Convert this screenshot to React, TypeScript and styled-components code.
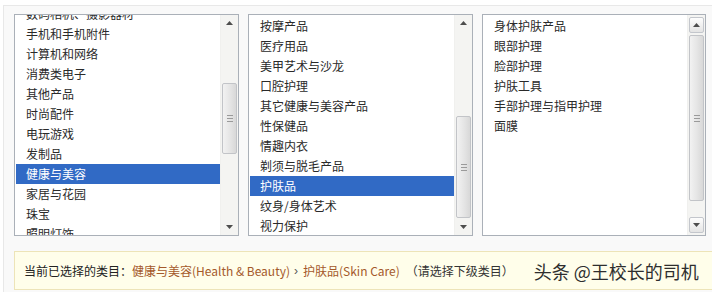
import styled, { createGlobalStyle } from 'styled-components';

const GlobalStyle = createGlobalStyle`
  html, body {
    margin: 0;
    padding: 0;
    background: #ffffff;
  }
  body {
    font-family: "Noto Sans CJK SC", "Liberation Sans", sans-serif;
    width: 712px;
    height: 292px;
    overflow: hidden;
  }
`;

const Panel = styled.div`
  margin: 5px 0 0 3px;
  width: 720px;
  height: 300px;
  box-sizing: border-box;
  border: 1px solid #e8e8e8;
  background: #f9f9f9;
  padding: 8px 0 0 10px;
`;

const Lists = styled.div`
  display: flex;
  gap: 9px;
`;

const ListBox = styled.div<{ $width: number }>`
  width: ${p => p.$width}px;
  height: 222px;
  box-sizing: border-box;
  border: 1px solid #aab0b8;
  background: #ffffff;
  display: flex;
  overflow: hidden;
`;

const Items = styled.ul<{ $scroll: number }>`
  list-style: none;
  margin: 0;
  padding: 0;
  flex: 1;
  min-width: 0;
  overflow: hidden;
  padding-top: 1px;
  & > li:first-child {
    margin-top: ${p => -p.$scroll}px;
  }
`;

const Item = styled.li<{ $selected?: boolean }>`
  height: 20px;
  line-height: 20px;
  padding-left: 10px;
  margin-left: 1px;
  font-size: 12px;
  white-space: nowrap;
  color: ${p => (p.$selected ? '#ffffff' : '#2a2a2a')};
  background: ${p => (p.$selected ? '#316ac5' : 'transparent')};
`;

const ScrollBar = styled.div`
  width: 17px;
  flex-shrink: 0;
  display: flex;
  flex-direction: column;
  background: #f4f4f2;
  border-left: 1px solid #f0f0ee;
`;

const Arrow = styled.div<{ $boxed?: boolean }>`
  height: 16px;
  flex-shrink: 0;
  display: flex;
  align-items: center;
  justify-content: center;
  margin: ${p => (p.$boxed ? '2px 1px' : '0')};
  box-sizing: border-box;
  border: ${p => (p.$boxed ? '1px solid #c3c6cc' : '1px solid transparent')};
  border-radius: 2px;
  background: ${p => (p.$boxed ? 'linear-gradient(#fdfdfd, #e4e4e4)' : 'transparent')};
`;

const Track = styled.div`
  flex: 1;
  display: flex;
  flex-direction: column;
`;

const Thumb = styled.div<{ $top: number; $height: number }>`
  margin: ${p => p.$top}px 1px 0 1px;
  height: ${p => p.$height}px;
  box-sizing: border-box;
  border: 1px solid #c2c4c8;
  border-radius: 2px;
  background: linear-gradient(90deg, #f2f2f2, #e6e6e6 50%, #d8d8d8);
  display: flex;
  align-items: center;
  justify-content: center;
`;

const Grip = styled.div`
  width: 6px;
  height: 7px;
  background: repeating-linear-gradient(#9a9a9a 0 1px, transparent 1px 3px);
`;

const InfoBar = styled.div`
  margin-top: 15px;
  height: 39px;
  box-sizing: border-box;
  border: 1px solid #ede4b8;
  border-right: none;
  background: #fffeea;
  display: flex;
  align-items: center;
  padding-left: 9px;
  font-size: 12px;
  white-space: nowrap;
`;

const Label = styled.span`
  color: #222222;
`;

const Crumb = styled.span`
  color: #a4592a;
`;

const Sep = styled.span`
  color: #555555;
  margin: 0 5px 0 4px;
  font-family: "Liberation Sans", sans-serif;
`;

const Hint = styled.span`
  color: #333333;
  margin-left: 6px;
`;

const Watermark = styled.span`
  margin-left: 20px;
  font-size: 18px;
  color: #2e2e2e;
  letter-spacing: 0;
`;

function ArrowGlyph({ down }: { down?: boolean }) {
  return (
    <svg width="7" height="4" viewBox="0 0 7 4">
      <path d={down ? 'M0 0 H7 L3.5 4 Z' : 'M0 4 H7 L3.5 0 Z'} fill="#4d4d4d" />
    </svg>
  );
}

interface ListProps {
  items: string[];
  selected?: string;
  scroll?: number;
  width: number;
  thumbTop: number;
  thumbHeight: number;
  boxed?: boolean;
}

function CategoryList({ items, selected, scroll = 0, width, thumbTop, thumbHeight, boxed }: ListProps) {
  return (
    <ListBox $width={width}>
      <Items $scroll={scroll}>
        {items.map(it => (
          <Item key={it} $selected={it === selected}>{it}</Item>
        ))}
      </Items>
      <ScrollBar>
        <Arrow $boxed={boxed}><ArrowGlyph /></Arrow>
        <Track>
          <Thumb $top={thumbTop} $height={thumbHeight}><Grip /></Thumb>
        </Track>
        <Arrow $boxed={boxed}><ArrowGlyph down /></Arrow>
      </ScrollBar>
    </ListBox>
  );
}

const level1 = [
  '数码相机、摄影器材',
  '手机和手机附件',
  '计算机和网络',
  '消费类电子',
  '其他产品',
  '时尚配件',
  '电玩游戏',
  '发制品',
  '健康与美容',
  '家居与花园',
  '珠宝',
  '照明灯饰',
];

const level2 = [
  '按摩产品',
  '医疗用品',
  '美甲艺术与沙龙',
  '口腔护理',
  '其它健康与美容产品',
  '性保健品',
  '情趣内衣',
  '剃须与脱毛产品',
  '护肤品',
  '纹身/身体艺术',
  '视力保护',
];

const level3 = ['身体护肤产品', '眼部护理', '脸部护理', '护肤工具', '手部护理与指甲护理', '面膜'];

export default function App() {
  return (
    <>
      <GlobalStyle />
      <Panel>
        <Lists>
          <CategoryList items={level1} selected="健康与美容" scroll={12} width={225} thumbTop={52} thumbHeight={71} />
          <CategoryList items={level2} selected="护肤品" width={225} thumbTop={85} thumbHeight={102} />
          <CategoryList items={level3} width={224} thumbTop={0} thumbHeight={166} boxed />
        </Lists>
        <InfoBar>
          <Label>当前已选择的类目：</Label>
          <Crumb>健康与美容(Health &amp; Beauty)</Crumb>
          <Sep>›</Sep>
          <Crumb>护肤品(Skin Care)</Crumb>
          <Hint>（请选择下级类目）</Hint>
          <Watermark>头条 @王校长的司机</Watermark>
        </InfoBar>
      </Panel>
    </>
  );
}
